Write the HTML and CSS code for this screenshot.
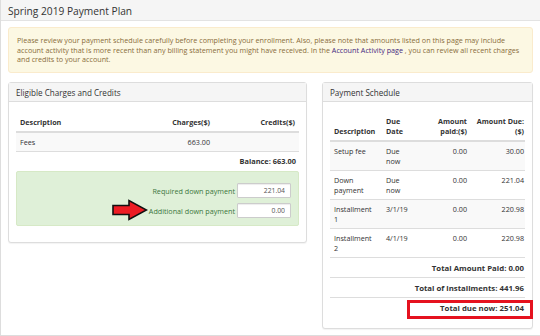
FILE: index.html
```html
<!DOCTYPE html>
<html lang="en">
<head>
  <meta charset="UTF-8" />
  <title>Spring 2019 Payment Plan</title>
  <link rel="stylesheet" href="styles.css">
</head>
<body>
  <div class="page">
    <div class="page-heading">Spring 2019 Payment Plan</div>
    <div class="page-body">
      <div class="alert">
        Please review your payment schedule carefully before completing your enrollment. Also, please note that amounts listed on this page may include account activity that is more recent than any billing statement you might have received. In the <a href="#">Account Activity page</a> , you can review all recent charges and credits to your account.
      </div>

      <div class="columns">
        <div class="panel panel-left">
          <div class="panel-heading">Eligible Charges and Credits</div>
          <div class="panel-body">
            <table class="grid charges">
              <colgroup>
                <col class="c-desc"><col class="c-charge"><col class="c-credit">
              </colgroup>
              <thead>
                <tr><th>Description</th><th class="num">Charges($)</th><th class="num">Credits($)</th></tr>
              </thead>
              <tbody>
                <tr class="odd"><td>Fees</td><td class="num">663.00</td><td class="num"></td></tr>
              </tbody>
            </table>
            <div class="balance">Balance: 663.00</div>

            <div class="down-box">
              <div class="down-row">
                <label>Required down payment</label>
                <input type="text" value="221.04" readonly>
              </div>
              <div class="down-row">
                <svg class="arrow" width="36" height="22" viewBox="0 0 36 22">
                  <path d="M1 6.5 H17 V1.5 L34.5 11 L17 20.5 V15.5 H1 Z" fill="#ed1c24" stroke="#111" stroke-width="1.6" stroke-linejoin="miter"/>
                </svg>
                <label>Additional down payment</label>
                <input type="text" value="0.00">
              </div>
            </div>
          </div>
        </div>

        <div class="panel panel-right">
          <div class="panel-heading">Payment Schedule</div>
          <div class="panel-body">
            <table class="grid schedule">
              <colgroup>
                <col class="s-desc"><col class="s-date"><col class="s-paid"><col class="s-due">
              </colgroup>
              <thead>
                <tr>
                  <th>Description</th>
                  <th>Due<br>Date</th>
                  <th class="num">Amount<br>paid:($)</th>
                  <th class="num">Amount Due:<br>($)</th>
                </tr>
              </thead>
              <tbody>
                <tr class="odd"><td>Setup fee</td><td>Due<br>now</td><td class="num">0.00</td><td class="num">30.00</td></tr>
                <tr><td>Down<br>payment</td><td>Due<br>now</td><td class="num">0.00</td><td class="num">221.04</td></tr>
                <tr class="odd"><td>Installment<br>1</td><td>3/1/19</td><td class="num">0.00</td><td class="num">220.98</td></tr>
                <tr><td>Installment<br>2</td><td>4/1/19</td><td class="num">0.00</td><td class="num">220.98</td></tr>
                <tr class="total"><td colspan="4">Total Amount Paid: 0.00</td></tr>
                <tr class="total"><td colspan="4">Total of installments: 441.96</td></tr>
                <tr class="total due-now"><td colspan="4">Total due now: 251.04<span class="highlight"></span></td></tr>
              </tbody>
            </table>
          </div>
        </div>
      </div>
    </div>
  </div>
</body>
</html>
```
FILE: styles.css
```css
* {
  margin: 0;
  padding: 0;
  box-sizing: border-box;
}
body {
  font-family: 'Open Sans', 'Noto Sans', sans-serif;
  font-size: 7.2px;
  line-height: 10px;
  color: #333;
  background: #fff;
}
.page {
  width: 541px;
  border: 1px solid #ddd;
  border-top: none;
  min-height: 336px;
}
.page-heading {
  height: 21px;
  padding: 0 7px;
  background: #f5f5f5;
  border-bottom: 1px solid #e3e3e3;
  font-size: 10.2px;
  line-height: 22px;
  color: #333;
}
.page-body {
  padding: 6px 7px 0 7px;
}
.alert {
  background: #fcf8e3;
  border: 1px solid #faebcc;
  border-radius: 3px;
  color: #8a6d3b;
  padding: 8px 8px 7px;
  line-height: 9.7px;
}
.alert a {
  color: #45297f;
  text-decoration: none;
}
.columns {
  display: flex;
  align-items: flex-start;
  gap: 15px;
  margin-top: 9px;
}
.panel {
  border: 1px solid #ddd;
  border-radius: 3px;
  background: #fff;
  box-shadow: 0 1px 1px rgba(0, 0, 0, 0.05);
}
.panel-left {
  width: 299px;
}
.panel-right {
  width: 211px;
}
.panel-heading {
  height: 19px;
  padding: 0 7px;
  background: #f5f5f5;
  border-bottom: 1px solid #ddd;
  font-size: 8.1px;
  line-height: 19px;
}
.panel-body {
  padding: 10px 7px 11px;
}
.panel-left .panel-body {
  padding-bottom: 16px;
}
.grid {
  width: 100%;
  border-collapse: collapse;
  table-layout: fixed;
}
.grid th {
  font-weight: bold;
  text-align: left;
  vertical-align: bottom;
  padding: 5px 4px 4px;
  border-bottom: 2px solid #ddd;
}
.grid td {
  vertical-align: top;
  padding: 4px 4px 4px;
  border-bottom: 1px solid #ddd;
}
.grid .num {
  text-align: right;
}
.grid tr.odd td {
  background: #f9f9f9;
}
.c-desc { width: 110px; }
.c-charge { width: 88px; }
.balance {
  text-align: right;
  font-weight: bold;
  font-size: 7.4px;
  padding: 4px 3px 5px;
  line-height: 10px;
}
.down-box {
  background: #dff0d8;
  border: 1px solid #d6e9c6;
  border-radius: 2px;
  padding: 11px 7px 7px;
  display: flex;
  flex-direction: column;
  gap: 5px;
}
.down-row {
  display: flex;
  justify-content: flex-end;
  align-items: center;
  height: 15px;
}
.down-row label {
  color: #3c763d;
  margin-right: 2px;
}
.down-row input {
  width: 54px;
  height: 15px;
  border: 1px solid #ccc;
  border-radius: 1px;
  box-shadow: inset 0 1px 1px rgba(0, 0, 0, 0.075);
  font-family: inherit;
  font-size: 6.8px;
  color: #555;
  text-align: right;
  padding: 0 5px;
  background: #fff;
}
.arrow {
  margin: -4px 1px -3px 0;
  flex-shrink: 0;
}
.s-desc { width: 52px; }
.s-date { width: 38px; }
.s-paid { width: 48px; }
.schedule th {
  padding: 4px 1px 4px 4px;
}
.schedule td {
  padding: 4px 1px 4px 4px;
}
.schedule tr.total td {
  text-align: right;
  font-weight: bold;
  font-size: 7.8px;
  padding: 5px 1px 4px;
}
.schedule tr.due-now td {
  border-bottom: none;
  position: relative;
}
.highlight {
  position: absolute;
  left: 77px;
  right: -8px;
  top: 2px;
  bottom: -2px;
  border: 3px solid #e5121f;
}
```
